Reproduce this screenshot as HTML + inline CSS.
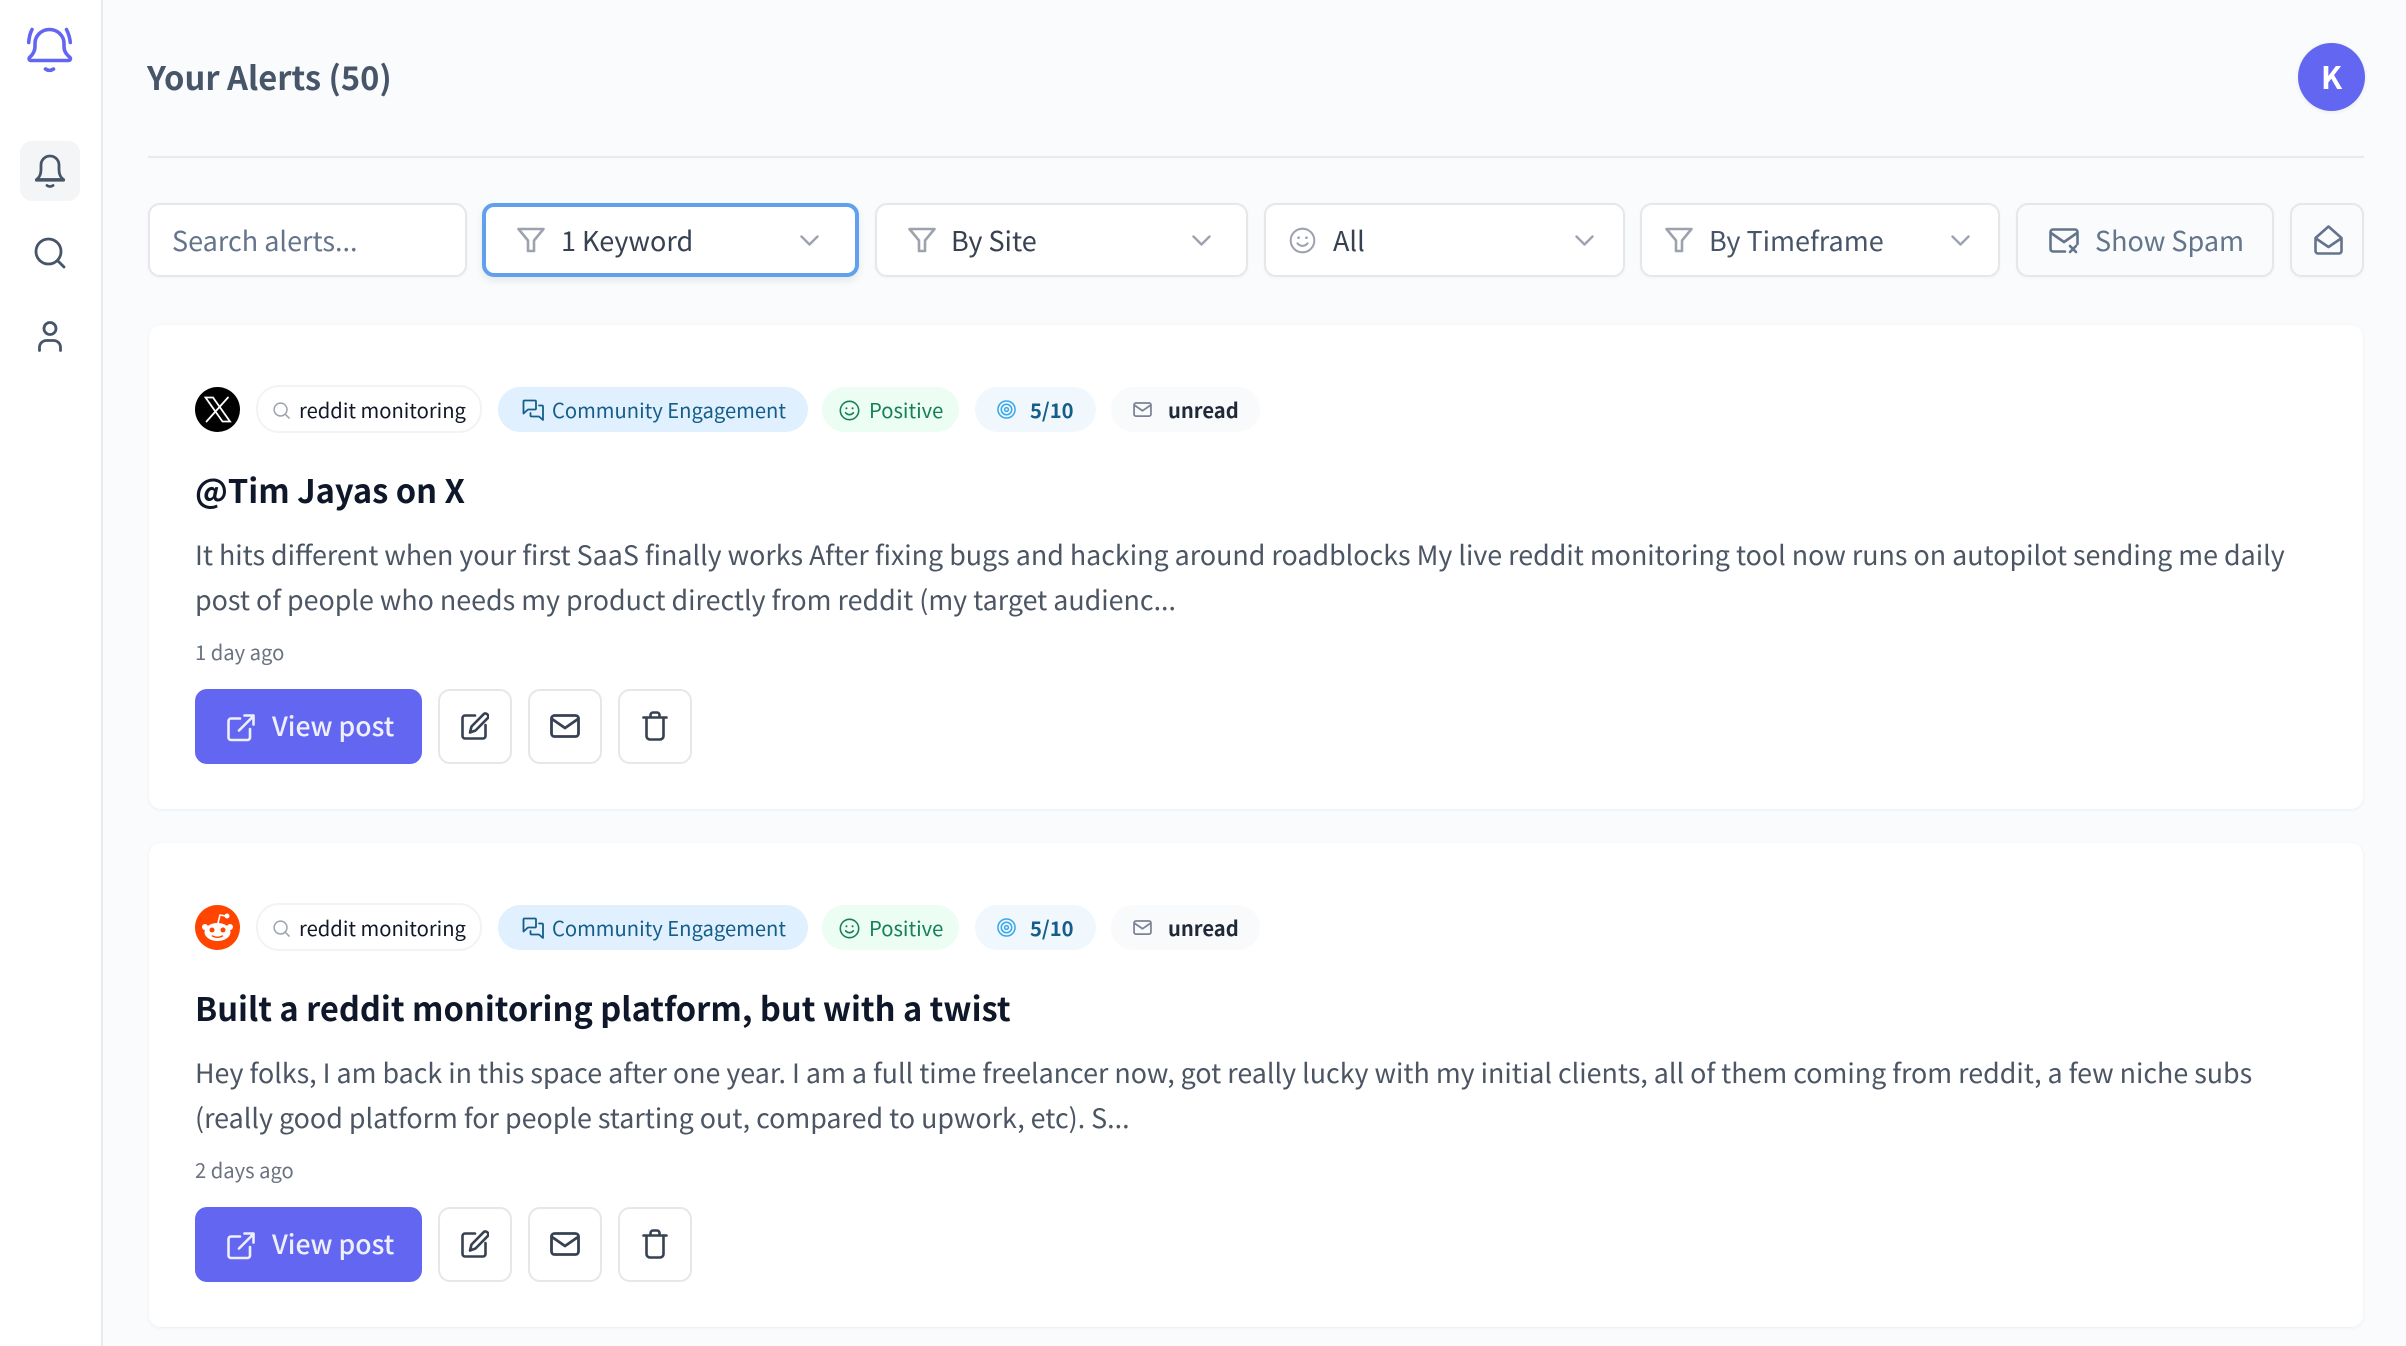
<!DOCTYPE html>
<html><head><meta charset="utf-8"><style>
*{box-sizing:border-box;margin:0;padding:0}
html,body{width:2406px;height:1346px;overflow:hidden;background:#f9fbfd;font-family:"Noto Sans CJK SC","Liberation Sans",sans-serif}
.a{position:absolute;white-space:nowrap}
.t{position:absolute;white-space:nowrap;line-height:1;display:block}
svg{position:absolute;overflow:visible;fill:none;stroke-linecap:round;stroke-linejoin:round}
.box{position:absolute;top:203px;height:74px;border:2.5px solid #e5e7eb;border-radius:12px;background:#fff;box-shadow:0 1px 3px rgba(0,0,0,.04)}
.card{position:absolute;left:149px;width:2214px;height:484px;background:#fff;border-radius:12px;box-shadow:0 1px 4px rgba(0,0,0,.06)}
.pill{position:absolute;top:62px;height:45px;border-radius:23px}
.ib{position:absolute;top:364px;width:74px;height:75px;border:2.5px solid #e5e7eb;border-radius:12px;background:#fff}
.f{font-size:27px;line-height:30px;top:225px}
.c{font-size:20.2px;line-height:30px;top:70px}
.h{font-size:32.65px;font-weight:600;line-height:38px;top:146px;color:#0f172a}
.b{font-size:26.84px;line-height:34px;color:#4b5563}
</style></head><body>
<svg width="0" height="0" style="position:absolute"><defs>
<symbol id="funnel" viewBox="0 0 28 26"><path d="M1.500 2h25L17 13.500V24l-6 0V13.500z" stroke="#9ca3af" stroke-width="2.600"/></symbol>
<symbol id="chev" viewBox="0 0 19 11"><path d="M1.500 1.500L9.500 9.500 17.500 1.500" stroke="#9ca3af" stroke-width="2.400"/></symbol>
<symbol id="smile" viewBox="0 0 24 24"><circle cx="12" cy="12" r="10.500" stroke="currentColor" stroke-width="1.800"/><path d="M7.500 14.500c2.500 3 6.500 3 9 0" stroke="currentColor" stroke-width="1.800"/><circle cx="8.500" cy="9.500" r="1.200" fill="currentColor"/><circle cx="15.500" cy="9.500" r="1.200" fill="currentColor"/></symbol>
<symbol id="mail" viewBox="0 0 30 24"><rect x="1.500" y="1.500" width="27" height="21" rx="3" stroke="currentColor" stroke-width="2.800"/><path d="M2 5l13 9 13-9" stroke="currentColor" stroke-width="2.800"/></symbol>
<symbol id="ext" viewBox="0 0 28 28"><path d="M13 4.500H4a2.500 2.500 0 0 0-2.500 2.500v16.500A2.500 2.500 0 0 0 4 26h16.500a2.500 2.500 0 0 0 2.500-2.500V15M12 16.500L26.500 2M17.500 1.500h9v9" stroke="#eef0ff" stroke-width="2.600"/></symbol>
<symbol id="edit" viewBox="0 0 28 28"><path d="M14 3.500H4a2.500 2.500 0 0 0-2.500 2.500v18A2.500 2.500 0 0 0 4 26.500h18a2.500 2.500 0 0 0 2.500-2.500V13" stroke="#374151" stroke-width="2.600"/><path d="M23 1.800a3 3 0 0 1 4 4L14.500 18.500 9 20.500l1.500-6z" stroke="#374151" stroke-width="2.600"/></symbol>
<symbol id="trash" viewBox="0 0 26 30"><path d="M1.500 6.500h23M4.500 6.500V25a3.500 3.500 0 0 0 3.500 3.500h10a3.500 3.500 0 0 0 3.500-3.500V6.500M8.500 6V4a2.500 2.500 0 0 1 2.500-2.500h4A2.500 2.500 0 0 1 17.500 4v2" stroke="#374151" stroke-width="2.600"/></symbol>
<symbol id="chat" viewBox="0 0 22 22"><path d="M2 1.500h11a1 1 0 0 1 1 1v7a1 1 0 0 1-1 1H6l-4.500 4V2.500a1 1 0 0 1 .5-1zM17 6.500h3a1 1 0 0 1 1 1v13.500l-4-3.500H9.500a1 1 0 0 1-1-1V14" stroke="#155e8a" stroke-width="1.800"/></symbol>
<symbol id="target" viewBox="0 0 20 20"><circle cx="10" cy="10" r="9" stroke="#38a8e8" stroke-width="1.600"/><circle cx="10" cy="10" r="5.500" stroke="#38a8e8" stroke-width="1.600"/><circle cx="10" cy="10" r="2" stroke="#38a8e8" stroke-width="1.600"/></symbol>
<symbol id="mag" viewBox="0 0 18 18"><circle cx="8" cy="8" r="6.800" stroke="#9ca3af" stroke-width="1.600"/><path d="M13 13l4 4" stroke="#9ca3af" stroke-width="1.600"/></symbol>
</defs></svg>

<!-- sidebar -->
<div class="a" style="left:0;top:0;width:103px;height:1346px;background:#fff;border-right:2.500px solid #e8eaee"></div>
<svg style="left:27px;top:28px" width="46" height="46" viewBox="0 0 46 46">
<path d="M8 15.500a14.500 14 0 0 1 29 0v3c0 5 2.500 8 6 11 1 1.500 0 3-1.500 3H4c-1.500 0-2.500-1.500-1.500-3 3.500-3 5.500-6 5.500-11z" stroke="#6366f1" stroke-width="3.600"/>
<path d="M18.500 41c2.500 1.800 5.500 1.800 8 0M5 1.500c-2 4-3 8-3.300 13M39.500 1.500c2 4 3.300 8 3.800 13" stroke="#6366f1" stroke-width="3.600"/></svg>
<div class="a" style="left:20px;top:141px;width:60px;height:60px;border-radius:12px;background:#f4f5f6"></div>
<svg style="left:35px;top:154px" width="30" height="34" viewBox="0 0 30 34">
<path d="M1.500 25.500c3-2 4.500-5 4.500-10V11a9 9 0 0 1 18 0v4.500c0 5 1.500 8 4.500 10z" stroke="#475569" stroke-width="2.800"/><path d="M1.500 26h27" stroke="#475569" stroke-width="3.200"/><path d="M12 31.500c1.800 1.300 4.200 1.300 6 0" stroke="#475569" stroke-width="2.800"/></svg>
<svg style="left:35px;top:238px" width="30" height="30" viewBox="0 0 30 30"><circle cx="13.500" cy="13.500" r="12.500" stroke="#475569" stroke-width="2.800"/><path d="M23 23l6 6" stroke="#475569" stroke-width="2.800"/></svg>
<svg style="left:38px;top:321px" width="24" height="31" viewBox="0 0 24 31"><circle cx="12" cy="7.500" r="6" stroke="#475569" stroke-width="2.800"/><path d="M1.500 29.500v-3a7 7 0 0 1 7-7h7a7 7 0 0 1 7 7v3" stroke="#475569" stroke-width="2.800"/></svg>

<!-- header -->
<span class="t" style="left:147px;top:59px;font-size:32.700px;font-weight:600;color:#475569;line-height:36px">Your Alerts (50)</span>
<div class="a" style="left:2298px;top:43px;width:67px;height:68px;border-radius:50%;background:#6366f1;box-shadow:0 1px 4px rgba(0,0,0,.08)"></div>
<span class="t" style="left:2298px;width:67px;text-align:center;top:59px;font-size:31px;font-weight:700;color:#fff;line-height:33px">K</span>
<div class="a" style="left:148px;top:156px;width:2216px;height:2px;background:#e8eaee"></div>

<!-- filters -->
<div class="box" style="left:148px;width:319px;"></div>
<span class="t f" style="left:172px;color:#64748b">Search alerts...</span>

<div class="box" style="left:482px;width:377px;border:4px solid #60a0ee;box-shadow:0 4px 8px rgba(0,0,0,.08)"></div>
<svg style="left:517px;top:227px" width="28" height="26"><use href="#funnel"/></svg>
<span class="t f" style="left:561px;color:#374151">1 Keyword</span>
<svg style="left:800px;top:235px" width="19" height="11"><use href="#chev"/></svg>

<div class="box" style="left:875px;width:373px"></div>
<svg style="left:908px;top:227px" width="28" height="26"><use href="#funnel"/></svg>
<span class="t f" style="left:951px;color:#374151">By Site</span>
<svg style="left:1192px;top:235px" width="19" height="11"><use href="#chev"/></svg>

<div class="box" style="left:1264px;width:361px"></div>
<svg style="left:1289px;top:227px;color:#9ca3af" width="27" height="27"><use href="#smile"/></svg>
<span class="t f" style="left:1333px;color:#374151">All</span>
<svg style="left:1575px;top:235px" width="19" height="11"><use href="#chev"/></svg>

<div class="box" style="left:1640px;width:360px"></div>
<svg style="left:1665px;top:227px" width="28" height="26"><use href="#funnel"/></svg>
<span class="t f" style="left:1709px;color:#475569">By Timeframe</span>
<svg style="left:1951px;top:235px" width="19" height="11"><use href="#chev"/></svg>

<div class="box" style="left:2016px;width:258px;background:#f9fbfd"></div>
<svg style="left:2049px;top:228px;color:#64748b" width="30" height="25" viewBox="0 0 30 25"><path d="M16 23.500H4a2.500 2.500 0 0 1-2.500-2.500V4A2.500 2.500 0 0 1 4 1.500h22A2.500 2.500 0 0 1 28.500 4v12M2 5l13 9 13-9M21 18l6 6M27 18l-6 6" stroke="currentColor" stroke-width="2.600"/></svg>
<span class="t f" style="left:2095px;color:#64748b">Show Spam</span>

<div class="box" style="left:2290px;width:74px;background:#f9fbfd"></div>
<svg style="left:2314px;top:225px" width="29" height="30" viewBox="0 0 29 30"><path d="M1.500 13L14.500 1.500 27.500 13v13a2.500 2.500 0 0 1-2.500 2.500H4A2.500 2.500 0 0 1 1.500 26zM2 13.500l12.500 8.500L27 13.500" stroke="#64748b" stroke-width="2.600"/></svg>

<!-- card 1 -->
<div class="card" style="top:325px">
<svg style="left:46px;top:62px" width="45" height="45" viewBox="0 0 45 45"><circle cx="22.500" cy="22.500" r="22.500" fill="#000"/><path d="M10.500 10.500h7.500l17 24h-7.500zM33 10.500L11.500 34.500" stroke="#fff" stroke-width="1.800" stroke-linejoin="miter"/></svg>
<div class="pill" style="left:107px;top:60px;width:226px;height:48px;border:2px solid #f1f3f5;background:#fff"></div>
<svg style="left:124px;top:77px" width="17" height="17"><use href="#mag"/></svg>
<span class="t c" style="left:150px;color:#111827">reddit monitoring</span>
<div class="pill" style="left:349px;width:310px;background:#e0f0fe"></div>
<svg style="left:373px;top:74px" width="22" height="22"><use href="#chat"/></svg>
<span class="t c" style="left:403px;color:#155e8a">Community Engagement</span>
<div class="pill" style="left:673px;width:137px;background:#ecfdf3"></div>
<svg style="left:690px;top:75px;color:#15805a" width="21" height="21"><use href="#smile"/></svg>
<span class="t c" style="left:720px;color:#15805a">Positive</span>
<div class="pill" style="left:826px;width:121px;background:#f0f8fe"></div>
<svg style="left:848px;top:75px" width="19" height="19"><use href="#target"/></svg>
<span class="t c" style="left:881px;font-weight:600;color:#155e8a">5/10</span>
<div class="pill" style="left:962px;width:149px;background:#f9fafb"></div>
<svg style="left:984px;top:77px;color:#7a8396" width="19" height="15"><use href="#mail"/></svg>
<span class="t c" style="left:1019px;font-weight:600;color:#1f2937">unread</span>
<span class="t h" style="left:46px">@Tim Jayas on X</span>
<span class="t b" style="left:46px;top:212px">It hits different when your first SaaS finally works After fixing bugs and hacking around roadblocks My live reddit monitoring tool now runs on autopilot sending me daily</span>
<span class="t b" style="left:46px;top:257px">post of people who needs my product directly from reddit (my target audienc...</span>
<span class="t" style="left:46px;top:315px;font-size:20.200px;line-height:24px;color:#6b7280">1 day ago</span>
<div class="a" style="left:46px;top:364px;width:227px;height:75px;background:#6366f1;border-radius:12px"></div>
<svg style="left:78px;top:389px" width="28" height="28"><use href="#ext"/></svg>
<span class="t" style="left:123px;top:383px;font-size:26.600px;font-weight:500;line-height:34px;color:#eef0ff">View post</span>
<div class="ib" style="left:289px"></div>
<svg style="left:312px;top:387px" width="28" height="28"><use href="#edit"/></svg>
<div class="ib" style="left:379px"></div>
<svg style="left:401px;top:389px;color:#374151" width="30" height="24"><use href="#mail"/></svg>
<div class="ib" style="left:469px"></div>
<svg style="left:493px;top:386px" width="26" height="30"><use href="#trash"/></svg>
</div>

<!-- card 2 -->
<div class="card" style="top:843px">
<svg style="left:46px;top:62px" width="45" height="45" viewBox="0 0 45 45"><circle cx="22.500" cy="22.500" r="22.500" fill="#ff4500"/><ellipse cx="22.500" cy="27" rx="13" ry="9" fill="#fff"/><circle cx="10" cy="22" r="3" fill="#fff"/><circle cx="35" cy="22" r="3" fill="#fff"/><path d="M23 18l2-8 6 1" stroke="#fff" stroke-width="1.600"/><circle cx="32" cy="11" r="2.500" fill="#fff"/><circle cx="17" cy="25" r="2.500" fill="#ff4500"/><circle cx="28" cy="25" r="2.500" fill="#ff4500"/><path d="M17.500 31c3 1.800 7 1.800 10 0" stroke="#ff4500" stroke-width="1.500"/></svg>
<div class="pill" style="left:107px;top:60px;width:226px;height:48px;border:2px solid #f1f3f5;background:#fff"></div>
<svg style="left:124px;top:77px" width="17" height="17"><use href="#mag"/></svg>
<span class="t c" style="left:150px;color:#111827">reddit monitoring</span>
<div class="pill" style="left:349px;width:310px;background:#e0f0fe"></div>
<svg style="left:373px;top:74px" width="22" height="22"><use href="#chat"/></svg>
<span class="t c" style="left:403px;color:#155e8a">Community Engagement</span>
<div class="pill" style="left:673px;width:137px;background:#ecfdf3"></div>
<svg style="left:690px;top:75px;color:#15805a" width="21" height="21"><use href="#smile"/></svg>
<span class="t c" style="left:720px;color:#15805a">Positive</span>
<div class="pill" style="left:826px;width:121px;background:#f0f8fe"></div>
<svg style="left:848px;top:75px" width="19" height="19"><use href="#target"/></svg>
<span class="t c" style="left:881px;font-weight:600;color:#155e8a">5/10</span>
<div class="pill" style="left:962px;width:149px;background:#f9fafb"></div>
<svg style="left:984px;top:77px;color:#7a8396" width="19" height="15"><use href="#mail"/></svg>
<span class="t c" style="left:1019px;font-weight:600;color:#1f2937">unread</span>
<span class="t h" style="left:46px">Built a reddit monitoring platform, but with a twist</span>
<span class="t b" style="left:46px;top:212px">Hey folks, I am back in this space after one year. I am a full time freelancer now, got really lucky with my initial clients, all of them coming from reddit, a few niche subs</span>
<span class="t b" style="left:46px;top:257px">(really good platform for people starting out, compared to upwork, etc). S...</span>
<span class="t" style="left:46px;top:315px;font-size:20.200px;line-height:24px;color:#6b7280">2 days ago</span>
<div class="a" style="left:46px;top:364px;width:227px;height:75px;background:#6366f1;border-radius:12px"></div>
<svg style="left:78px;top:389px" width="28" height="28"><use href="#ext"/></svg>
<span class="t" style="left:123px;top:383px;font-size:26.600px;font-weight:500;line-height:34px;color:#eef0ff">View post</span>
<div class="ib" style="left:289px"></div>
<svg style="left:312px;top:387px" width="28" height="28"><use href="#edit"/></svg>
<div class="ib" style="left:379px"></div>
<svg style="left:401px;top:389px;color:#374151" width="30" height="24"><use href="#mail"/></svg>
<div class="ib" style="left:469px"></div>
<svg style="left:493px;top:386px" width="26" height="30"><use href="#trash"/></svg>
</div>
</body></html>
